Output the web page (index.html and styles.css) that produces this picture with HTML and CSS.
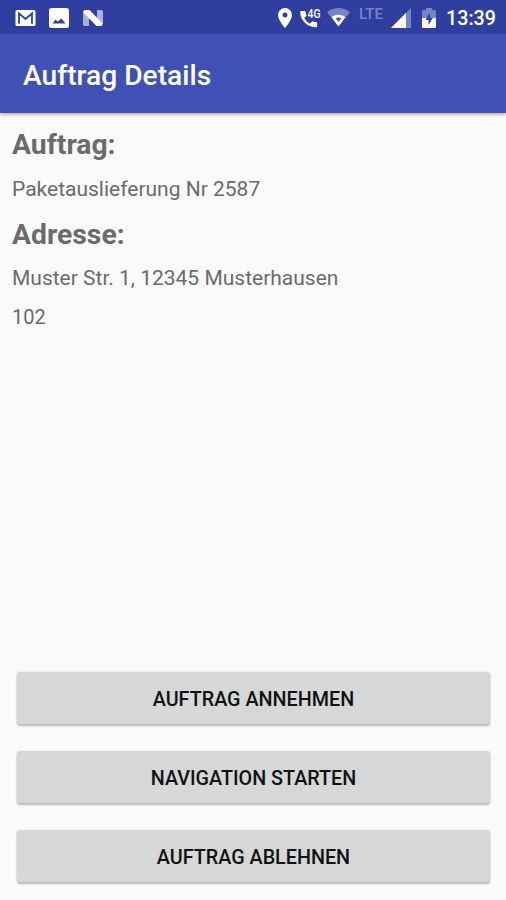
FILE: index.html
```html
<!DOCTYPE html>
<html lang="de">
<head>
<meta charset="utf-8">
<title>Auftrag Details</title>
<link rel="stylesheet" href="styles.css">
</head>
<body>
<header class="top">
  <div class="status">
    <div class="notifications">
      <svg width="21" height="18" viewBox="0 0 22 18"><rect x=".5" y=".5" width="21" height="17" rx="2" fill="#fff"/><path d="M4.200 15V4.200L11 10l6.800-5.800V15" fill="none" stroke="#303f9f" stroke-width="1.900"/></svg>
      <svg width="20" height="20" viewBox="0 0 20 20"><rect width="20" height="20" rx="2.500" fill="#fff"/><path d="M3.500 15.500L6.500 11.500l2.200 2L12.500 10.500l4 5z" fill="#303f9f"/></svg>
      <svg width="22" height="18" viewBox="0 0 22 18"><path d="M1 3v13l1.500 1H7V9zM15 1h4.500L21 2v13l-6-6z" fill="#a9b1df"/><path d="M2.300 1H7.500L21 14.800L19.500 17H14.500L1 3.300z" fill="#fff"/></svg>
    </div>
    <div class="system">
      <svg class="pin" width="14" height="20" viewBox="0 0 14 20"><path fill-rule="evenodd" d="M7 0a7 7 0 0 0-7 7c0 5 7 13 7 13s7-8 7-13a7 7 0 0 0-7-7zm0 4.500a2.500 2.500 0 1 1 0 5 2.500 2.500 0 0 1 0-5z" fill="#fff"/></svg>
      <svg class="call" width="23" height="21" viewBox="0 0 23 21"><path d="M1.200 4H4.500q1 0 1.100 1 .1 1.600.7 3.100.2.700-.3 1.200L4.200 11.100q2 3.800 5.600 5.600l2-2q.5-.5 1.200-.3 1.500.5 3.100.6 1 .1 1 1v3.300q0 1-1 1C7.500 20.300.2 13.500.2 5q0-1 1-1z" fill="#fff"/><text class="network" x="7.500" y="10.500" textLength="13" lengthAdjust="spacingAndGlyphs">4G</text></svg>
      <svg class="wifi" width="23" height="19" viewBox="0 0 23 19"><path d="M0 4Q11.500-4 23 4L11.500 18.500z" fill="#7783c7"/><path d="M4.500 9Q11.500 4.500 18.500 9L11.500 18.500z" fill="#fff"/><path d="M8.500 10.200Q11.500 8.800 14.500 10.200L11.500 14z" fill="#56577b"/></svg>
      <span class="lte">LTE</span>
      <svg class="signal" width="20" height="20" viewBox="0 0 20 20"><path d="M0 20L20 0v20z" fill="#7783c7"/><path d="M0 20L15 5v15z" fill="#fff"/></svg>
      <svg class="battery" width="14" height="20" viewBox="0 0 14 20"><path d="M4 0h6v2h2.500q1.500 0 1.500 1.500V10H0V3.500Q0 2 1.500 2H4z" fill="#7783c7"/><path d="M0 10h14v8.500q0 1.500-1.500 1.500h-11Q0 20 0 18.500z" fill="#fff"/><path d="M8 4.500v5.500h2.800l-4.300 7V12H3.500z" fill="#303f9f"/></svg>
      <span class="clock">13:39</span>
    </div>
  </div>
  <h1 class="title">Auftrag Details</h1>
</header>
<main class="content">
  <h2 class="heading">Auftrag:</h2>
  <p class="value first">Paketauslieferung Nr 2587</p>
  <h2 class="heading second">Adresse:</h2>
  <p class="value">Muster Str. 1, 12345 Musterhausen</p>
  <p class="value number">102</p>
</main>
<footer class="actions">
  <button class="action">AUFTRAG ANNEHMEN</button>
  <button class="action">NAVIGATION STARTEN</button>
  <button class="action">AUFTRAG ABLEHNEN</button>
</footer>
</body>
</html>
```
FILE: styles.css
```css
* { box-sizing: border-box; }
body {
  margin: 0;
  height: 900px;
  display: flex;
  flex-direction: column;
  background: #fafafa;
  color: #6b6b6b;
  font-family: Roboto, sans-serif;
}
h1, h2, p { margin: 0; }
svg { display: block; flex: none; }
.top {
  height: 113px;
  flex: none;
  background: #3f51b5;
  box-shadow: 0 1px 4px rgba(0, 0, 0, .4);
  color: #fff;
}
.status {
  height: 34px;
  display: flex;
  justify-content: space-between;
  padding: 0 11px 0 15px;
  background: #303f9f;
}
.notifications { display: flex; align-items: center; gap: 13px; height: 35px; }
.system { display: flex; align-items: center; height: 35px; }
.call { margin-left: 8px; }
.network { font: 500 13px Roboto, sans-serif; fill: #fff; }
.wifi { margin-left: 4px; }
.lte {
  margin-left: 9px;
  width: 26px;
  height: 22px;
  font-size: 15px;
  line-height: 14px;
  font-weight: 500;
  color: #7783c7;
}
.signal { margin-left: 6px; }
.battery { margin-left: 11px; }
.clock {
  width: 49px;
  margin-left: 10px;
  padding-top: 2px;
  font-size: 19.7px;
  font-weight: 500;
  line-height: 24px;
  white-space: nowrap;
}
.title {
  padding: 25px 23px 0;
  font-size: 28.2px;
  line-height: 33px;
  font-weight: 500;
}
.content { flex: 1; padding: 15px 12px 0; }
.heading { font-size: 28.3px; line-height: 33px; font-weight: 700; }
.second { margin-top: 17px; }
.value { margin-top: 16px; font-size: 21px; line-height: 23px; }
.first { margin-top: 17px; }
.number { font-size: 20px; }
.actions {
  display: flex;
  flex-direction: column;
  gap: 27px;
  padding: 0 16px 18px 17px;
}
.action {
  height: 52px;
  border: 0;
  border-radius: 3px;
  background: #d6d8d7;
  box-shadow: 0 2px 2px rgba(0, 0, 0, .25), 0 0 2px rgba(0, 0, 0, .12);
  color: #111;
  padding: 3px 0 0;
  font: 500 19.75px/24px Roboto, sans-serif;
}
```
